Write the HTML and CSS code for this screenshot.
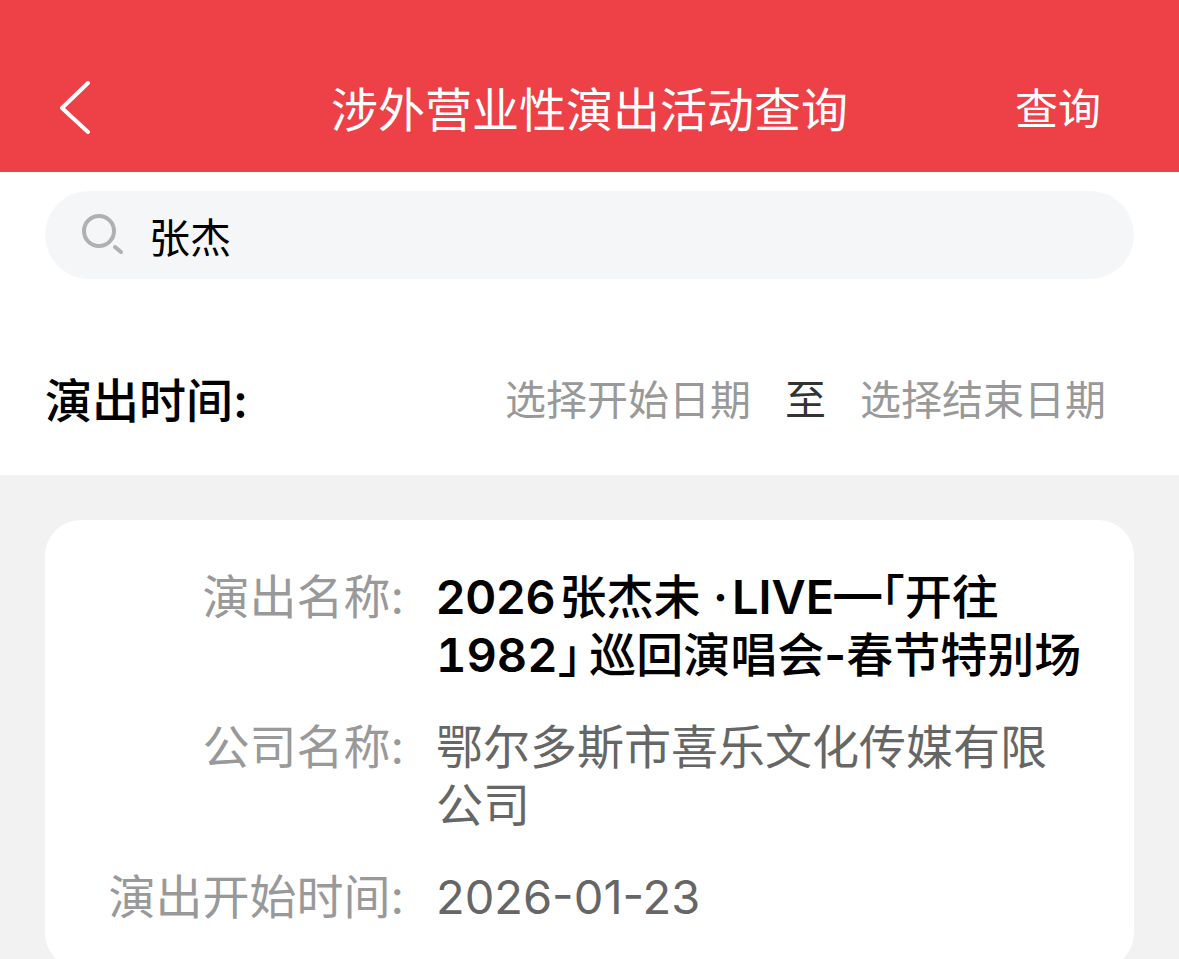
FILE: index.html
```
<!DOCTYPE html>
<html lang="zh-CN">
<head>
    <meta charset="UTF-8">
    <meta name="viewport" content="width=device-width, initial-scale=1.0">
    <title>涉外营业性演出活动查询</title>
    <link rel="stylesheet" href="styles.css">
</head>
<body>
    <header class="navbar">
        <button class="backBtn" type="button" aria-label="返回">
            <svg width="36" height="56" viewBox="0 0 36 56" fill="none" stroke="#fff" stroke-width="4" stroke-linecap="round" stroke-linejoin="round">
                <path d="M32 5 L6 30 L32 54"/>
            </svg>
        </button>
        <h1 class="title">涉外营业性演出活动查询</h1>
        <button class="queryBtn" type="submit" form="searchForm">查询</button>
    </header>

    <form class="filters" id="searchForm">
        <div class="searchBox">
            <svg class="searchIcon" width="44" height="44" viewBox="0 0 44 44" fill="none" stroke="#b0b0b0" stroke-width="4">
                <circle cx="18" cy="18" r="15"/>
                <path d="M34 34 L40 39" stroke-linecap="round"/>
            </svg>
            <input class="searchInput" type="text" name="keyword" value="张杰" aria-label="演出名称">
        </div>
        <div class="dateRow">
            <span class="dateLabel">演出时间<b>:</b></span>
            <div class="dates">
                <button class="dateBtn" type="button">选择开始日期</button>
                <span class="to">至</span>
                <button class="dateBtn" type="button">选择结束日期</button>
            </div>
        </div>
    </form>

    <main class="results">
        <dl class="card">
            <dt>演出名称:</dt>
            <dd class="name"><b>2026&hairsp;</b>张杰未 <b>·&hairsp;LIVE—</b>「开往<b class="num">1982</b>」&thinsp;巡回演唱会<b>-</b>春节特别场</dd>
            <dt>公司名称:</dt>
            <dd>鄂尔多斯市喜乐文化传媒有限公司</dd>
            <dt>演出开始时间:</dt>
            <dd>2026-01-23</dd>
        </dl>
    </main>
</body>
</html>
```
FILE: styles.css
```
*{
    box-sizing: border-box;
}
body{
    margin: 0;
    height: 100vh;
    overflow: hidden;
    background: #f2f2f2;
    font-family: Inter, "Noto Sans CJK SC", sans-serif;
    color: #000;
}
button, input{
    font-family: inherit;
    border: none;
    background: none;
    padding: 0;
}
b{
    font-weight: 600;
}
.navbar{
    display: grid;
    grid-template-columns: 1fr auto 1fr;
    align-items: center;
    height: 172px;
    padding: 40px 56px 0;
    background: #ee4047;
    color: #fff;
}
.backBtn{
    justify-self: start;
    height: 56px;
}
.backBtn svg{
    display: block;
}
.title{
    margin: 0;
    font-size: 47px;
    font-weight: 400;
}
.queryBtn{
    justify-self: end;
    margin-right: 22px;
    color: #fff;
    font-size: 43px;
}
.filters{
    background: #fff;
    padding: 19px 45px 48px;
}
.searchBox{
    display: flex;
    align-items: center;
    gap: 24px;
    height: 88px;
    padding: 0 36px;
    border-radius: 44px;
    background: #f5f6f8;
}
.searchInput{
    flex: 1;
    min-width: 0;
    font-size: 41px;
    outline: none;
}
.dateRow{
    display: flex;
    justify-content: space-between;
    align-items: center;
    margin-top: 88px;
    height: 60px;
}
.dateLabel{
    font-size: 47px;
    font-weight: 500;
}
.dates{
    display: flex;
    align-items: center;
    gap: 34px;
    padding-right: 28px;
    font-size: 41px;
}
.dateBtn{
    font-size: 41px;
    color: #999;
}
.to{
    color: #333;
}
.results{
    padding: 45px 45px 0;
}
.card{
    display: grid;
    grid-template-columns: 314px 1fr;
    gap: 34px 32px;
    margin: 0;
    padding: 48px 42px 43px 45px;
    border-radius: 36px;
    background: #fff;
    font-size: 47px;
    line-height: 58px;
}
dt{
    color: #999;
    text-align: right;
}
dd{
    margin: 0;
    color: #666;
}
.name{
    color: #000;
    font-weight: 500;
    /* half-width corner brackets */
    font-feature-settings: "halt";
}
.num{
    font-feature-settings: "tnum";
}
```
